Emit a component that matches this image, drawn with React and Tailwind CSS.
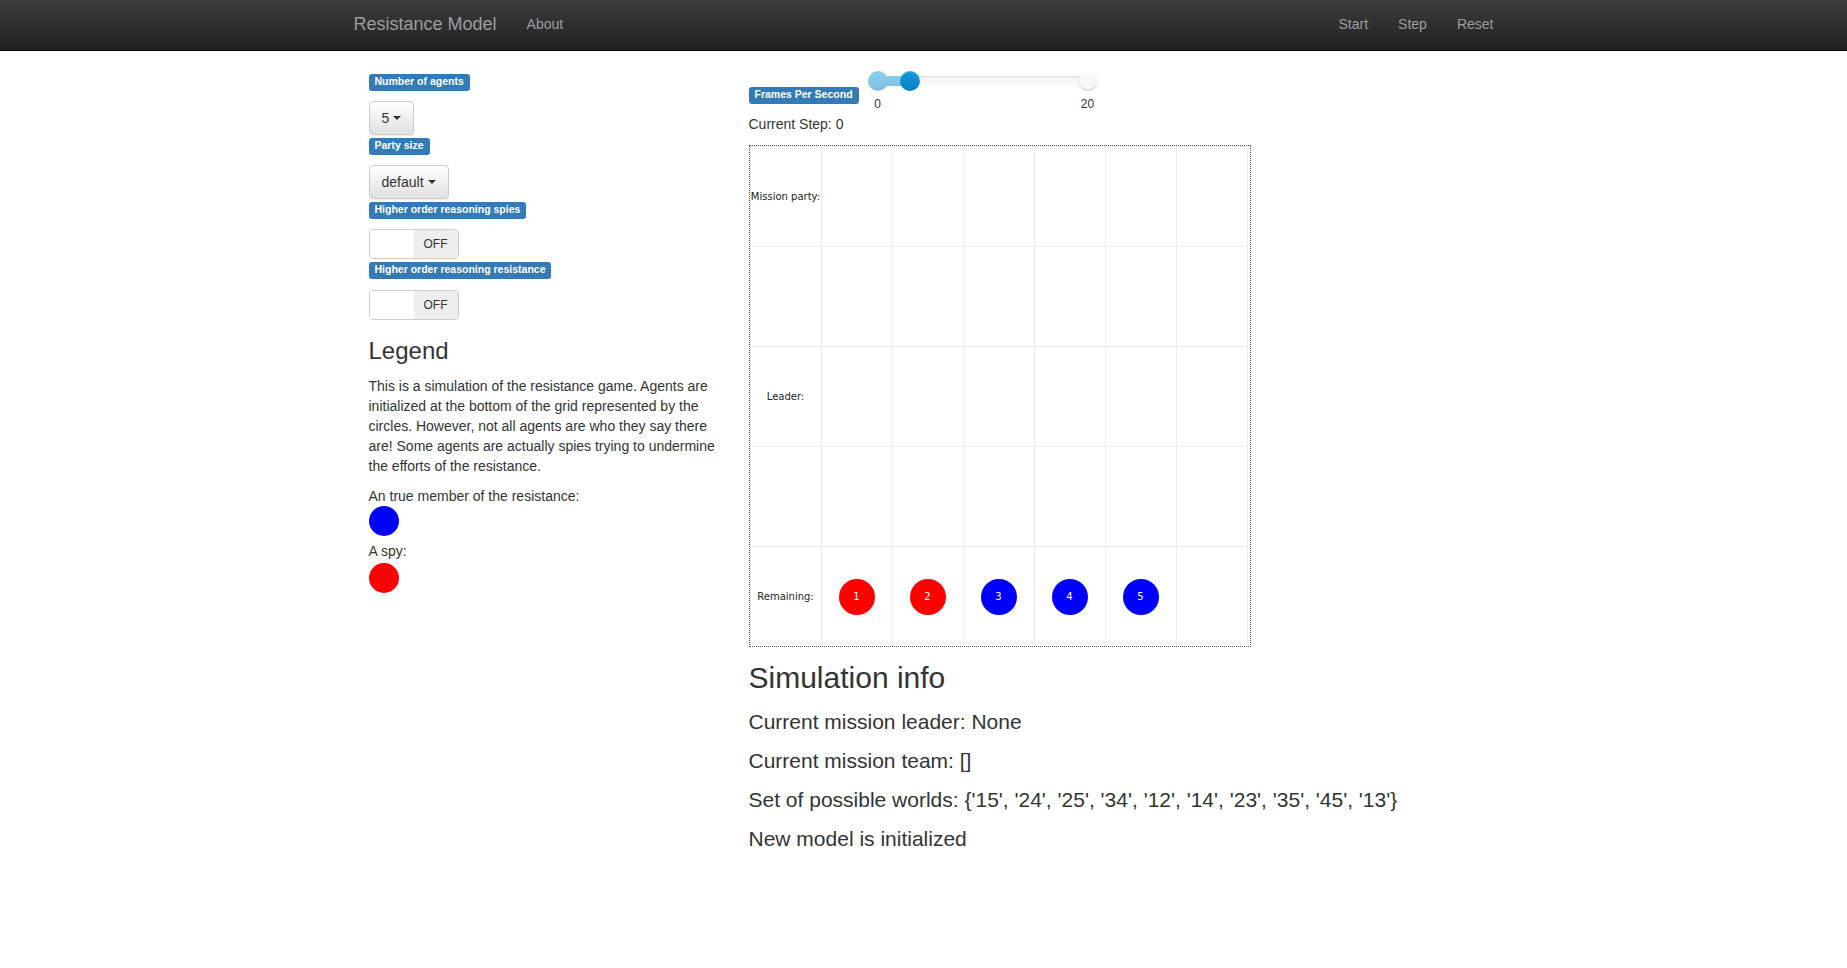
import React from "react";

const Label = ({ children, className = "" }) => (
  <span
    className={`block w-fit rounded-[3px] bg-[#337ab7] px-[6px] pt-[2px] pb-[4px] text-[10.5px] font-bold leading-[11px] text-white ${className}`}
  >
    {children}
  </span>
);

const Dropdown = ({ value, className = "" }) => (
  <button
    className={`flex h-[34px] items-center rounded-[4px] border border-[#ccc] bg-linear-to-b from-white to-[#e0e0e0] px-[12px] text-[14px] text-[#333] shadow-[0_1px_1px_rgba(0,0,0,0.075)] ${className}`}
  >
    {value}
    <span className="ml-[4px] inline-block h-0 w-0 border-x-[4px] border-t-[4px] border-x-transparent border-t-[#333]" />
  </button>
);

const Toggle = ({ className = "" }) => (
  <div
    className={`flex h-[30px] w-[90px] overflow-hidden rounded-[4px] border border-[#ccc] ${className}`}
  >
    <div className="w-[44px] bg-white" />
    <div className="flex flex-1 items-center justify-center bg-[#eee] text-[12px] text-[#333]">
      OFF
    </div>
  </div>
);

const agents = [
  { n: 1, color: "bg-[#ff0000]" },
  { n: 2, color: "bg-[#ff0000]" },
  { n: 3, color: "bg-[#0000ff]" },
  { n: 4, color: "bg-[#0000ff]" },
  { n: 5, color: "bg-[#0000ff]" },
];

const rowLabels = ["Mission party:", "", "Leader:", "", "Remaining:"];

const Grid = () => (
  <div className="h-[502px] w-[502px] border border-dotted border-[#555]">
    <div className="grid w-[498px] grid-cols-[repeat(7,71px)] grid-rows-[repeat(5,100px)] border-r border-[#ebebeb] font-['DejaVu_Sans',sans-serif] text-[10px] text-[#222]">
      {rowLabels.map((label, r) =>
        Array.from({ length: 7 }).map((_, c) => (
          <div
            key={`${r}-${c}`}
            className="flex items-center justify-center border-t border-l border-[#ebebeb]"
          >
            {c === 0 && label}
            {r === 4 && c > 0 && agents[c - 1] && (
              <div
                className={`flex h-[36px] w-[36px] items-center justify-center rounded-full text-white ${agents[c - 1].color}`}
              >
                {agents[c - 1].n}
              </div>
            )}
          </div>
        ))
      )}
    </div>
  </div>
);

const Slider = () => (
  <div className="relative ml-[19px] h-[20px] w-[210px]">
    <div className="absolute top-[5px] left-0 h-[10px] w-[210px] rounded-[4px] bg-linear-to-b from-[#f5f5f5] to-[#f9f9f9] shadow-[inset_0_1px_2px_rgba(0,0,0,0.1)]" />
    <div className="absolute top-[5px] left-0 h-[10px] w-[32px] bg-linear-to-b from-[#89cdef] to-[#81bfde]" />
    <div className="absolute top-0 left-[-10px] h-[20px] w-[20px] rounded-full bg-linear-to-b from-[#89cdef] to-[#81bfde]" />
    <div className="absolute top-0 left-[200px] h-[20px] w-[20px] rounded-full bg-linear-to-b from-[#f9f9f9] to-[#f5f5f5] shadow-[inset_0_-1px_0_rgba(0,0,0,0.15)]" />
    <div className="absolute top-0 left-[22px] h-[20px] w-[20px] rounded-full bg-linear-to-b from-[#149bdf] to-[#0480be] shadow-[inset_0_1px_0_rgba(255,255,255,0.2)]" />
    <span className="absolute top-[25px] left-0 -translate-x-1/2 text-[12px] leading-[17px] text-[#333]">
      0
    </span>
    <span className="absolute top-[25px] left-[210px] -translate-x-1/2 text-[12px] leading-[17px] text-[#333]">
      20
    </span>
  </div>
);

const App = () => {
  return (
    <div className="min-h-screen bg-white font-['Liberation_Sans',Arial,sans-serif] text-[14px] leading-[20px] text-[#333]">
      <nav className="h-[51px] border-b border-[#080808] bg-linear-to-b from-[#3c3c3c] to-[#222]">
        <div className="mx-auto flex h-[50px] w-[1170px] items-center px-[15px] pb-[2px] text-[#9d9d9d]">
          <span className="text-[18px]">Resistance Model</span>
          <a className="ml-[30px]">About</a>
          <div className="ml-auto flex gap-[30px]">
            <a>Start</a>
            <a>Step</a>
            <a>Reset</a>
          </div>
        </div>
      </nav>

      <div className="mx-auto mt-[20px] flex w-[1170px] px-[15px]">
        <div className="w-[380px] px-[15px]">
          <Label className="mt-[3px]">Number of agents</Label>
          <Dropdown value="5" className="mt-[10px]" />
          <Label className="mt-[3px]">Party size</Label>
          <Dropdown value="default" className="mt-[10px]" />
          <Label className="mt-[3px]">Higher order reasoning spies</Label>
          <Toggle className="mt-[10px]" />
          <Label className="mt-[3px]">Higher order reasoning resistance</Label>
          <Toggle className="mt-[11px]" />

          <h3 className="mt-[18px] mb-[12px] text-[24px] leading-[26px] font-normal">
            Legend
          </h3>
          <p className="mb-[10px]">
            This is a simulation of the resistance game. Agents are initialized
            at the bottom of the grid represented by the circles. However, not
            all agents are who they say there are! Some agents are actually
            spies trying to undermine the efforts of the resistance.
          </p>
          <p>An true member of the resistance:</p>
          <div className="mb-[5px] h-[30px] w-[30px] rounded-full bg-[#0000ff]" />
          <p>A spy:</p>
          <div className="mt-[2px] h-[30px] w-[30px] rounded-full bg-[#ff0000]" />
        </div>

        <div className="w-[760px] px-[15px]">
          <div className="flex h-[43px] items-start">
            <Label className="mt-[16px]">Frames Per Second</Label>
            <Slider />
          </div>
          <p>Current Step: 0</p>
          <div className="mt-[11px]">
            <Grid />
          </div>

          <h2 className="mt-[14px] mb-[16px] text-[30px] leading-[33px] font-normal">
            Simulation info
          </h2>
          <div className="text-[21px] leading-[23px]">
            <p className="mb-[16px]">Current mission leader: None</p>
            <p className="mb-[16px]">Current mission team: []</p>
            <p className="mb-[16px]">
              Set of possible worlds: {"{'15', '24', '25', '34', '12', '14', '23', '35', '45', '13'}"}
            </p>
            <p className="mb-[16px]">New model is initialized</p>
          </div>
        </div>
      </div>
    </div>
  );
};

export default App;
